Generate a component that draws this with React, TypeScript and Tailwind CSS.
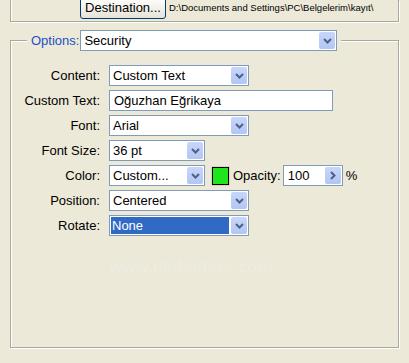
import React from "react";

const font = { fontFamily: '"Liberation Sans", Arial, sans-serif' };

function DropButton({ dir = "down" }: { dir?: "down" | "right" }) {
  return (
    <div className="m-[1px] flex w-[16px] items-center justify-center rounded-[2px] bg-gradient-to-b from-[#c7d6fb] to-[#b3c6f2]">
      {dir === "down" ? (
        <svg width="9" height="6" viewBox="0 0 9 6">
          <path d="M1 1 L4.5 4.5 L8 1" fill="none" stroke="#4d6185" strokeWidth="2" />
        </svg>
      ) : (
        <svg width="6" height="9" viewBox="0 0 6 9">
          <path d="M1 1 L4.5 4.5 L1 8" fill="none" stroke="#4d6185" strokeWidth="2" />
        </svg>
      )}
    </div>
  );
}

function Select({ value, width, selected }: { value: string; width: string; selected?: boolean }) {
  return (
    <div className={`flex h-[21px] border border-[#7f9db9] bg-white ${width}`}>
      <div className="flex flex-1 items-center p-[1px]">
        {selected ? (
          <span className="flex h-full w-full items-center bg-[#316ac5] pl-[1px] text-white">{value}</span>
        ) : (
          <span className="pl-[2px]">{value}</span>
        )}
      </div>
      <DropButton />
    </div>
  );
}

export default function App() {
  return (
    <div className="relative h-[363px] w-[409px] overflow-hidden bg-[#ece9d8] text-[13px] text-black" style={font}>
      <div className="mx-[10px] flex h-[22px] border-x border-b border-[#aca899] shadow-[1px_1px_0_#fff,inset_1px_0_0_#fff]">
        <div className="-mt-[6px] ml-[69px] flex items-center gap-[3px]">
          <button className="h-[22px] w-[86px] rounded-[3px] border border-[#003c74] bg-gradient-to-b from-white to-[#e6e3d6] leading-none">
            Destination...
          </button>
          <span className="mt-[1px] text-[9.5px]">D:\Documents and Settings\PC\Belgelerim\kayıt\</span>
        </div>
      </div>

      <fieldset className="mx-[10px] mt-[8px] h-[318px] border border-[#aca899] shadow-[1px_1px_0_#fff,inset_1px_1px_0_#fff]">
        <legend className="ml-[16px] bg-[#ece9d8] px-[4px]">
          <div className="flex items-center gap-[1px]">
            <span className="text-[#1c4fc4]">Options:</span>
            <Select value="Security" width="w-[257px]" />
          </div>
        </legend>

        <div className="grid grid-cols-[89px_auto] items-center gap-x-[9px] gap-y-[4px] pt-[14px]">
          <span className="text-right">Content:</span>
          <Select value="Custom Text" width="w-[140px]" />

          <span className="text-right">Custom Text:</span>
          <div className="flex h-[21px] w-[224px] items-center border border-[#7f9db9] bg-white pl-[4px]">Oğuzhan Eğrikaya</div>

          <span className="text-right">Font:</span>
          <Select value="Arial" width="w-[140px]" />

          <span className="text-right">Font Size:</span>
          <Select value="36 pt" width="w-[96px]" />

          <span className="text-right">Color:</span>
          <div className="flex items-center">
            <Select value="Custom..." width="w-[96px]" />
            <div className="ml-[7px] h-[18px] w-[17px] border border-black bg-[#1fe61a] shadow-[0_0_0_1px_#d8d5c8]" />
            <span className="ml-[4px]">Opacity:</span>
            <div className="ml-[2px] flex h-[21px] w-[60px] border border-[#7f9db9] bg-white">
              <span className="flex flex-1 items-center pl-[4px]">100</span>
              <DropButton dir="right" />
            </div>
            <span className="ml-[3px]">%</span>
          </div>

          <span className="text-right">Position:</span>
          <Select value="Centered" width="w-[140px]" />

          <span className="text-right">Rotate:</span>
          <Select value="None" width="w-[140px]" selected />
        </div>

        <div className="mt-[18px] pl-[98px] text-[17px] font-bold text-[#eeebdf]">www.dijitalders.com</div>
      </fieldset>
    </div>
  );
}
